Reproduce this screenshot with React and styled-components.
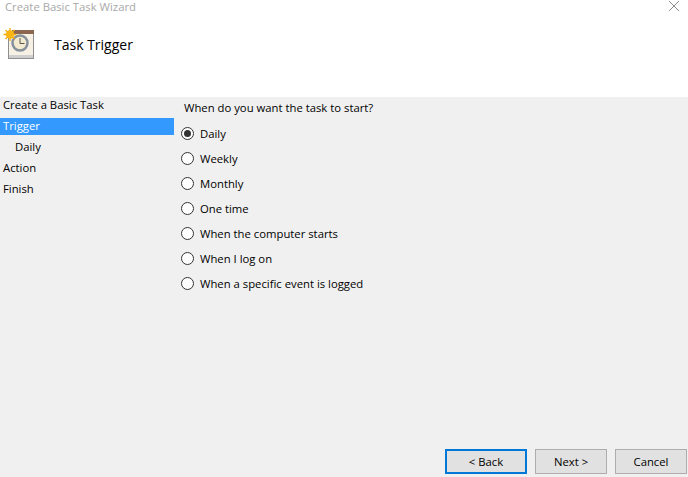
import React from 'react'
import styled, { createGlobalStyle } from 'styled-components'

const GlobalStyle = createGlobalStyle`
    html, body {
        margin: 0;
        padding: 0;
        background: #f0f0f0;
    }
    * {
        box-sizing: border-box;
    }
`

const steps = [
    { label: 'Create a Basic Task' },
    { label: 'Trigger', active: true },
    { label: 'Daily', nested: true },
    { label: 'Action' },
    { label: 'Finish' },
]

const options = [
    'Daily',
    'Weekly',
    'Monthly',
    'One time',
    'When the computer starts',
    'When I log on',
    'When a specific event is logged',
]

function TaskIcon() {
    return (
        <svg width="32" height="32" viewBox="0 0 32 32">
            <rect x="5.5" y="3.5" width="25" height="27" fill="#f6f1e4" stroke="#8f8f8f" />
            <rect x="6" y="27" width="24" height="3" fill="#cfcfcf" />
            <rect x="9" y="2" width="22" height="4" fill="#8d6650" />
            <circle cx="17" cy="15" r="7.5" fill="#f3ead0" stroke="#87919b" strokeWidth="2.5" />
            <path d="M17 10v5.5h4.5" fill="none" stroke="#555" strokeWidth="1" />
            <path d="M7 0v13M0.5 6.5h13M2.5 2l9 9M11.5 2l-9 9" stroke="#f4a90f" strokeWidth="1.3" />
            <circle cx="7" cy="6.5" r="4.2" fill="#f8b514" />
        </svg>
    )
}

export default function App() {
    return (
        <Window>
            <GlobalStyle />
            <Header>
                <TitleBar>
                    <WindowTitle>Create Basic Task Wizard</WindowTitle>
                    <CloseIcon width="10" height="10" viewBox="0 0 10 10">
                        <path d="M0 0l10 10M10 0L0 10" stroke="#8a8a8a" strokeWidth="1" fill="none" />
                    </CloseIcon>
                </TitleBar>
                <Banner>
                    <TaskIcon />
                    <BannerTitle>Task Trigger</BannerTitle>
                </Banner>
            </Header>
            <Body>
                <Sidebar>
                    {steps.map(step => (
                        <Step key={step.label} $active={step.active} $nested={step.nested}>
                            <StepLabel $active={step.active}>{step.label}</StepLabel>
                        </Step>
                    ))}
                </Sidebar>
                <Content>
                    <Question>When do you want the task to start?</Question>
                    <OptionList>
                        {options.map((option, i) => (
                            <Option key={option}>
                                <Radio $checked={i === 0} />
                                <span>{option}</span>
                            </Option>
                        ))}
                    </OptionList>
                </Content>
            </Body>
            <Footer>
                <Button $focused>&lt; Back</Button>
                <Button>Next &gt;</Button>
                <Button>Cancel</Button>
            </Footer>
        </Window>
    )
}

const Window = styled.div`
    width: 688px;
    height: 477px;
    display: flex;
    flex-direction: column;
    overflow: hidden;
    background: #f0f0f0;
    color: #000;
    font-family: "Open Sans", "Noto Sans", "Liberation Sans", sans-serif;
    font-size: 11.3px;
`
const Header = styled.div`
    height: 97px;
    flex: none;
    background: #fff;
`
const TitleBar = styled.div`
    height: 12px;
    display: flex;
    align-items: center;
    justify-content: space-between;
    padding: 0 9px 0 5px;
`
const WindowTitle = styled.span`
    color: #a8a8a8;
`
const CloseIcon = styled.svg`
    display: block;
`
const Banner = styled.div`
    display: flex;
    align-items: flex-start;
    gap: 19px;
    padding: 16px 0 0 3px;
`
const BannerTitle = styled.h1`
    margin: 7px 0 0;
    font-size: 14px;
    font-weight: 400;
    line-height: 20px;
`
const Body = styled.div`
    flex: 1;
    display: flex;
    min-height: 0;
`
const Sidebar = styled.div`
    width: 174px;
    flex: none;
    margin-top: -2px;
`
const Step = styled.div`
    height: 21px;
    display: flex;
    align-items: center;
    padding-left: ${props => (props.$nested ? '12px' : '0')};
`
const StepLabel = styled.div`
    width: 100%;
    height: 17px;
    line-height: 15px;
    padding-left: 3px;
    background: ${props => (props.$active ? '#3399ff' : 'transparent')};
    color: ${props => (props.$active ? '#fff' : '#000')};
`
const Content = styled.div`
    flex: 1;
    padding: 2px 0 0 10px;
`
const Question = styled.div`
    height: 17px;
    line-height: 17px;
`
const OptionList = styled.div`
    display: flex;
    flex-direction: column;
    gap: 8px;
    margin: 9px 0 0 -3px;
`
const Option = styled.label`
    height: 17px;
    display: flex;
    align-items: center;
    gap: 6px;
    line-height: 17px;
`
const Radio = styled.span`
    width: 13px;
    height: 13px;
    flex: none;
    display: flex;
    align-items: center;
    justify-content: center;
    border: 1px solid #333;
    border-radius: 50%;
    background: #fff;
    &::after {
        content: '';
        display: ${props => (props.$checked ? 'block' : 'none')};
        width: 7px;
        height: 7px;
        border-radius: 50%;
        background: #333;
    }
`
const Footer = styled.div`
    height: 28px;
    flex: none;
    display: flex;
    justify-content: flex-end;
    gap: 8px;
    padding-right: 1px;
`
const Button = styled.div`
    width: ${props => (props.$focused ? '82px' : '72px')};
    height: 25px;
    display: flex;
    align-items: center;
    justify-content: center;
    background: #e1e1e1;
    border: ${props => (props.$focused ? '2px solid #0078d7' : '1px solid #adadad')};
`
